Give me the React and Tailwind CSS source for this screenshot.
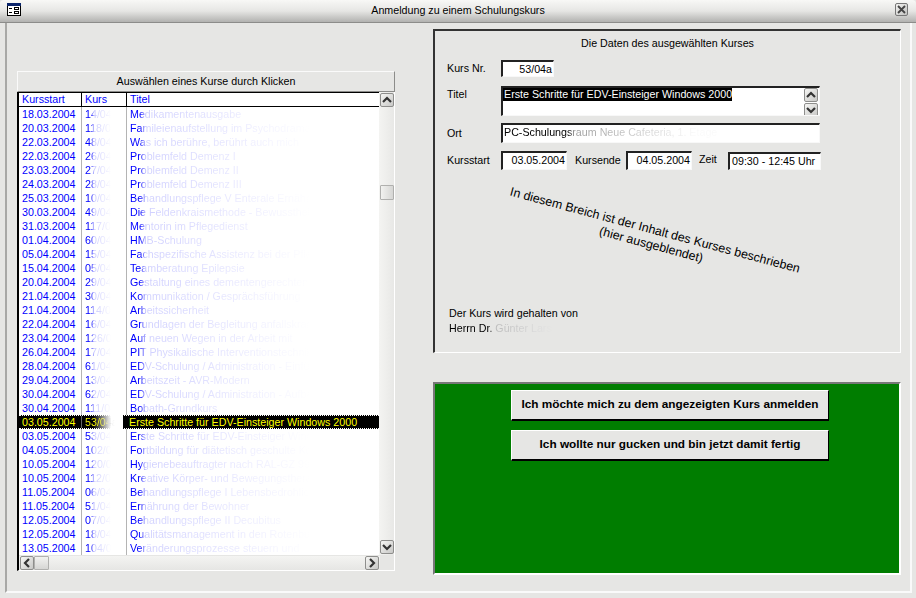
import React from "react";

const rows = [
  ["18.03.2004", "14/04", "Medikamentenausgabe"],
  ["20.03.2004", "118/04", "Famileienaufstellung im Psychodrama"],
  ["22.03.2004", "48/04", "Was ich berühre, berührt auch mich"],
  ["22.03.2004", "26/04", "Problemfeld Demenz I"],
  ["23.03.2004", "27/04", "Problemfeld Demenz II"],
  ["24.03.2004", "28/04", "Problemfeld Demenz III"],
  ["25.03.2004", "10/04", "Behandlungspflege V Enterale Ernährung"],
  ["30.03.2004", "49/04", "Die Feldenkraismethode - Bewusstheit"],
  ["31.03.2004", "117/04", "Mentorin im Pflegedienst"],
  ["01.04.2004", "60/04", "HMB-Schulung"],
  ["05.04.2004", "15/04", "Fachspezifische Assistenz bei der Pflege"],
  ["15.04.2004", "05/04", "Teamberatung Epilepsie"],
  ["20.04.2004", "29/04", "Gestaltung eines dementengerechten Umfelds"],
  ["21.04.2004", "30/04", "Kommunikation / Gesprächsführung"],
  ["21.04.2004", "114/04", "Arbeitssicherheit"],
  ["22.04.2004", "16/04", "Grundlagen der Begleitung anfallskranker"],
  ["23.04.2004", "126/04", "Auf neuen Wegen in der Arbeit mit"],
  ["26.04.2004", "17/04", "PIT Physikalische Interventionstechniken"],
  ["28.04.2004", "61/04", "EDV-Schulung / Administration - Einführung"],
  ["29.04.2004", "13/04", "Arbeitszeit - AVR-Modern"],
  ["30.04.2004", "62/04", "EDV-Schulung / Administration - Aufbau"],
  ["30.04.2004", "111/04", "Bobath-Grundkurs"],
  ["03.05.2004", "53/04a", "Erste Schritte für EDV-Einsteiger Windows 2000", true],
  ["03.05.2004", "53/04a", "Erste Schritte für EDV-Einsteiger Windows 2000"],
  ["04.05.2004", "102/04", "Fortbildung für diätetisch geschulte Kochkräfte"],
  ["10.05.2004", "120/04", "Hygienebeauftragter nach RAL-GZ 99"],
  ["10.05.2004", "112/04", "Kreative Körper- und Bewegungstherapie"],
  ["11.05.2004", "06/04", "Behandlungspflege I Lebensbedrohliche"],
  ["11.05.2004", "51/04", "Ernährung der Bewohner"],
  ["12.05.2004", "07/04", "Behandlungspflege II Decubitus"],
  ["12.05.2004", "18/04", "Qualitätsmanagement in den Rotenburger"],
  ["13.05.2004", "104/04", "Veränderungsprozesse steuern und"],
];

const chev = {
  up: "M2 8 L6 4 L10 8",
  down: "M2 4 L6 8 L10 4",
  left: "M8 2 L4 6 L8 10",
  right: "M4 2 L8 6 L4 10",
};

function ScrollBtn({ dir, className = "" }) {
  return (
    <div className={"w-[14px] h-[14px] shrink-0 rounded-[2px] border border-[#8e8e8c] bg-gradient-to-br from-[#f6f6f4] to-[#c8c8c6] flex items-center justify-center " + className}>
      <svg width="12" height="12" viewBox="0 0 12 12" fill="none" stroke="#333" strokeWidth="2.2">
        <path d={chev[dir]} />
      </svg>
    </div>
  );
}

function Row({ r }) {
  const sel = r[3];
  return (
    <div className={"grid grid-cols-[62px_45px_1fr] h-[14px] shrink-0 whitespace-nowrap overflow-hidden " + (sel ? "border-y border-dotted border-white bg-[linear-gradient(90deg,#000_0px,#000_74px,#fff_92px,#fff_104px,#000_104px)] text-[#ffff00] leading-[12px]" : "leading-[14px] text-[#0000ff]")}>
      <div className="pl-[3px]">{r[0]}</div>
      <div className={"pl-[3px] border-l overflow-hidden " + (sel ? "border-[#666]" : "border-[#b4b4b4]")}>
        <span className={"bg-clip-text text-transparent " + (sel ? "bg-[linear-gradient(90deg,#ffff00_0px,#ffff00_12px,#ddd_24px,#fff_30px)]" : "bg-[linear-gradient(90deg,#0000ff_0px,#0000ff_6px,#c8c8ff_9px,#e4e4ff_18px,#fff_26px)]")}>{r[1]}</span>
      </div>
      <div className={"pl-[3px] overflow-hidden " + (sel ? "" : "border-l border-[#b4b4b4]")}>
        {sel ? (
          <span>{r[2]}</span>
        ) : (
          <span className="bg-clip-text text-transparent bg-[linear-gradient(90deg,#0000ff_0px,#0000ff_10px,#d0d0ff_16px,#e2e2ff_80px,#f4f4ff_140px,#fff_180px)]">{r[2]}</span>
        )}
      </div>
    </div>
  );
}

function Field({ className = "", children }) {
  return (
    <div className={"border-t-2 border-l-2 border-t-[#222] border-l-[#222] border-b border-r border-b-[#f8f8f8] border-r-[#f8f8f8] bg-white leading-[14px] whitespace-nowrap overflow-hidden " + className}>
      {children}
    </div>
  );
}

export default function App() {
  return (
    <div className="w-[916px] h-[598px] overflow-hidden bg-[#e6e6e4] font-['Liberation_Sans',Arial,sans-serif] text-[10.7px] text-black flex flex-col">
      {/* title bar */}
      <div className="h-[23px] shrink-0 flex items-center justify-between pl-[7px] pr-[8px] pb-[3px] rounded-t-[4px] bg-gradient-to-b from-[#f8f8f6] via-[#e6e6e4] to-[#b2b2b0] border-b border-[#8c8c8a]">
        <svg width="14" height="13" viewBox="0 0 14 13" className="shrink-0">
          <rect x="0.5" y="0.5" width="13" height="12" fill="#fff" stroke="#000" />
          <rect x="0" y="0" width="14" height="3" fill="#0a246a" />
          <path d="M2 5.5 H5 M2 9.5 H5" stroke="#000" />
          <rect x="7.5" y="4.5" width="4" height="2" fill="none" stroke="#000" />
          <rect x="7.5" y="8.5" width="4" height="2" fill="none" stroke="#000" />
        </svg>
        <div className="leading-[14px] text-black">Anmeldung zu einem Schulungskurs</div>
        <div className="w-[13px] h-[13px] rounded-[2px] border border-[#777] bg-gradient-to-br from-[#f2f2f0] to-[#c4c4c2] flex items-center justify-center shrink-0">
          <svg width="11" height="11" viewBox="0 0 11 11" fill="none" stroke="#444" strokeWidth="1.8">
            <path d="M2 2 L9 9 M9 2 L2 9" />
          </svg>
        </div>
      </div>

      {/* body */}
      <div className="flex-1 ml-[5px] mr-[4px] mb-[5px] border-l-2 border-l-[#a8a8a6] border-r-2 border-r-[#fafafa] border-b-2 border-b-[#fafafa] flex items-start pl-[10px]">
        {/* left */}
        <div className="w-[378px] shrink-0 pt-[48px]">
          <div className="h-[21px] border border-t-[#fafafa] border-l-[#fafafa] border-r-[#8c8c8a] border-b-[#8c8c8a] flex items-center justify-center">
            Auswählen eines Kurse durch Klicken
          </div>
          <div className="border-l-2 border-l-black border-r border-r-white border-b border-b-white">
            <div className="flex h-[463px]">
              <div className="w-[361px] bg-white flex flex-col overflow-hidden">
                <div className="grid grid-cols-[62px_45px_1fr] h-[13px] leading-[13px] shrink-0 border-y border-black text-[#0000ff] box-content">
                  <div className="pl-[3px]">Kursstart</div>
                  <div className="pl-[3px] border-l border-black">Kurs</div>
                  <div className="pl-[3px] border-l border-black">Titel</div>
                </div>
                {rows.map((r, i) => (
                  <Row key={i} r={r} />
                ))}
                <Row r={["14.05.2004", "105/04", "Pflegeplanung und Dokumentation"]} />
              </div>
              <div className="w-[15px] flex flex-col items-center bg-gradient-to-r from-[#f4f4f2] to-[#e8e8e6]">
                <ScrollBtn dir="up" className="mt-[1px]" />
                <div className="w-[14px] h-[15px] mt-[78px] border border-[#b0b0ae] rounded-[1px] bg-gradient-to-r from-[#f2f2f0] to-[#d6d6d4]" />
                <div className="flex-1" />
                <ScrollBtn dir="down" className="mb-[1px]" />
              </div>
            </div>
            <div className="h-[15px] flex items-center">
              <div className="w-[361px] flex items-center bg-gradient-to-b from-[#f4f4f2] to-[#e6e6e4] pl-[1px] pr-[1px]">
                <ScrollBtn dir="left" />
                <div className="w-[15px] h-[14px] border border-[#b0b0ae] rounded-[1px] bg-gradient-to-b from-[#f2f2f0] to-[#d6d6d4]" />
                <div className="flex-1" />
                <ScrollBtn dir="right" />
              </div>
            </div>
          </div>
        </div>

        {/* right */}
        <div className="w-[468px] ml-[38px] shrink-0 pt-[6px]">
          <div className="relative h-[324px] border-t-2 border-l-2 border-t-[#333] border-l-[#333] border-b border-r border-b-white border-r-white">
            <div className="text-center leading-[14px] mt-[5px]">Die Daten des ausgewählten Kurses</div>
            <div className="flex items-center h-[17px] mt-[10px] ml-[12px]">
              <div className="w-[54px]">Kurs Nr.</div>
              <Field className="w-[53px] h-[17px] text-right pr-[1px] bg-[#fbfbfb]">53/04a</Field>
            </div>
            <div className="flex items-start mt-[9px] ml-[12px]">
              <div className="w-[54px] leading-[14px] mt-[1px]">Titel</div>
              <Field className="w-[319px] h-[30px] flex justify-between pr-[1px]">
                <span className="bg-black text-white h-[13px] leading-[13px] pl-[1px]">Erste Schritte für EDV-Einsteiger Windows 2000</span>
                <div className="flex flex-col gap-[1px]">
                  <ScrollBtn dir="up" />
                  <ScrollBtn dir="down" />
                </div>
              </Field>
            </div>
            <div className="flex items-center mt-[7px] ml-[12px]">
              <div className="w-[54px]">Ort</div>
              <Field className="w-[319px] h-[20px] bg-[#fafafa] pl-[1px]">
                <span className="bg-clip-text text-transparent bg-[linear-gradient(90deg,#000_0px,#000_64px,#999_70px,#ccc_130px,#fafafa_190px)]">PC-Schulungsraum Neue Cafeteria, 1. Etage</span>
              </Field>
            </div>
            <div className="flex items-center mt-[8px] ml-[12px]">
              <div className="w-[54px]">Kursstart</div>
              <Field className="w-[66px] h-[19px] text-right pr-[1px]">03.05.2004</Field>
              <div className="w-[59px] pl-[8px]">Kursende</div>
              <Field className="w-[66px] h-[19px] text-right pr-[1px]">04.05.2004</Field>
              <div className="w-[36px] pl-[7px] -mt-[2px]">Zeit</div>
              <Field className="w-[93px] h-[18px] pl-[2px]">09:30 - 12:45 Uhr</Field>
            </div>
            <div className="mt-[53px] ml-[63px] w-[310px] text-center text-[12.4px] leading-[15px] text-black rotate-[15deg] origin-center whitespace-nowrap">
              <div>In diesem Breich ist der Inhalt des Kurses beschrieben</div>
              <div>(hier ausgeblendet)</div>
            </div>
            <div className="mt-[53px] ml-[14px] leading-[15px]">
              <div>Der Kurs wird gehalten von</div>
              <div>
                <span className="bg-clip-text text-transparent bg-[linear-gradient(90deg,#000_0px,#000_40px,#bbb_46px,#ddd_90px,#e6e6e4_105px)]">Herrn Dr. Günter Lars</span>
              </div>
            </div>
          </div>

          <div className="mt-[29px] h-[193px] bg-[#007d00] border-t-2 border-l-2 border-t-[#777] border-l-[#777] border-b-2 border-r-2 border-b-white border-r-white flex flex-col items-center gap-[9px] pt-[6px] pl-[6px]">
            <div className="w-[318px] h-[31px] shrink-0 bg-[#e6e6e4] border-t border-l border-t-white border-l-white border-b-2 border-r border-b-black border-r-black flex items-center justify-center font-bold text-[11.8px]">
              Ich möchte mich zu dem angezeigten Kurs anmelden
            </div>
            <div className="w-[318px] h-[31px] shrink-0 bg-[#e6e6e4] border-t border-l border-t-white border-l-white border-b-2 border-r border-b-black border-r-black flex items-center justify-center font-bold text-[11.8px]">
              Ich wollte nur gucken und bin jetzt damit fertig
            </div>
          </div>
        </div>
      </div>
    </div>
  );
}
